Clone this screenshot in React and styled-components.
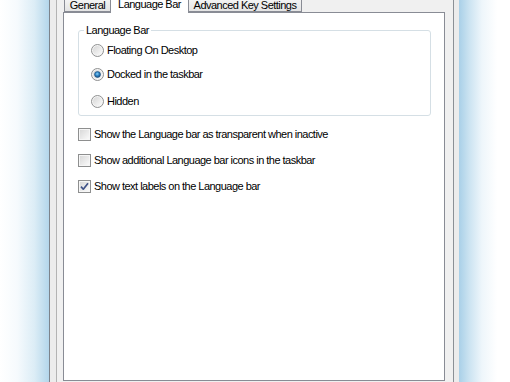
import React from 'react';
import styled, { createGlobalStyle } from 'styled-components';

const Global = createGlobalStyle`
  html, body { margin: 0; padding: 0; background: #fff; overflow: hidden; }
  #root { width: 510px; height: 382px; }
`;

const Page = styled.div`
  display: flex;
  width: 510px;
  height: 382px;
  overflow: hidden;
  font-family: "Liberation Sans", Arial, sans-serif;
  font-size: 11px;
  letter-spacing: -0.52px;
  color: #000;
`;

const Backdrop = styled.div`
  flex: none;
  width: ${p => p.$w}px;
  background: ${p =>
    p.$side === 'left'
      ? 'linear-gradient(to right, #ffffff 0%, #f6fafd 35%, #dcedf6 70%, #b3d6eb 100%)'
      : 'linear-gradient(to right, #a9d0e8 0%, #cbe3f1 20%, #eef6fb 45%, #ffffff 75%)'};
`;

const Frame = styled.div`
  flex: none;
  display: flex;
  width: 410px;
  box-sizing: border-box;
  border-left: 1px solid #7d848c;
  padding: 0 5px 0 6px;
  background: #ececec;
`;

const Body = styled.div`
  flex: 1;
  display: flex;
  flex-direction: column;
  border-left: 1px solid #b3b3b3;
  border-right: 1px solid #8b9096;
  background: #f0f0f0;
  padding: 0 8px 1px 6px;
`;

const TabStrip = styled.div`
  flex: none;
  display: flex;
  height: 12px;
  padding-left: 1px;
  position: relative;
  z-index: 1;
`;

const Tab = styled.div`
  flex: none;
  box-sizing: border-box;
  width: ${p => p.$w}px;
  height: ${p => (p.$active ? 13 : 12)}px;
  margin: 0 ${p => (p.$active ? -1 : 0)}px;
  border: 1px solid #898c95;
  border-top: none;
  border-bottom: ${p => (p.$active ? 'none' : '1px solid #898c95')};
  background: ${p => (p.$active ? '#ffffff' : 'linear-gradient(to bottom, #f3f3f3, #e4e4e4)')};
  text-align: center;
  white-space: nowrap;
  line-height: ${p => (p.$active ? 8 : 10)}px;
  position: relative;
  z-index: ${p => (p.$active ? 2 : 1)};
`;

const Panel = styled.div`
  flex: 1;
  border: 1px solid #898c95;
  background: #ffffff;
  padding: 11px 13px 0 14px;
`;

const GroupBox = styled.fieldset`
  margin: 0;
  padding: 0;
  border: 1px solid #d5dfe5;
  border-radius: 3px;
`;

const Legend = styled.legend`
  margin-left: 5px;
  padding: 0 2px;
  line-height: 13px;
`;

const RadioList = styled.div`
  display: flex;
  flex-direction: column;
  padding: 7px 0 7px 12px;
`;

const Option = styled.label`
  display: flex;
  align-items: center;
  gap: 3px;
  height: 13px;
  line-height: 13px;
  margin-top: ${p => p.$top || 0}px;
  white-space: nowrap;
`;

const CheckList = styled.div`
  display: flex;
  flex-direction: column;
  margin-top: 12px;
`;

const Control = styled.svg`
  flex: none;
  display: block;
`;

function Radio({ checked }) {
  return (
    <Control width="13" height="13" viewBox="0 0 13 13">
      <defs>
        <linearGradient id="rbg" x1="0" y1="0" x2="1" y2="1">
          <stop offset="0" stopColor="#d6d6d6" />
          <stop offset="1" stopColor="#fbfbfb" />
        </linearGradient>
        <radialGradient id="rdot" cx="0.45" cy="0.4" r="0.6">
          <stop offset="0" stopColor="#8fd0f5" />
          <stop offset="0.5" stopColor="#2f86c6" />
          <stop offset="1" stopColor="#174a7c" />
        </radialGradient>
      </defs>
      <circle cx="6.5" cy="6.5" r="6" fill="#f4f4f4" stroke="#8f9091" />
      <circle cx="6.5" cy="6.5" r="4.5" fill="url(#rbg)" />
      {checked && <circle cx="6.5" cy="6.5" r="3" fill="url(#rdot)" stroke="#1c4f80" strokeWidth="0.6" />}
    </Control>
  );
}

function Check({ checked }) {
  return (
    <Control width="13" height="13" viewBox="0 0 13 13">
      <defs>
        <linearGradient id="cbg" x1="0" y1="0" x2="1" y2="1">
          <stop offset="0" stopColor="#d9d9d9" />
          <stop offset="1" stopColor="#f9f9f9" />
        </linearGradient>
      </defs>
      <rect x="0.5" y="0.5" width="12" height="12" fill="#f6f6f6" stroke="#8e8f8f" />
      <rect x="2" y="2" width="9" height="9" fill="url(#cbg)" />
      {checked && (
        <path d="M3 6.6 L5.3 9.2 L10 3.2" fill="none" stroke="#3f5287" strokeWidth="1.7" strokeLinejoin="round" />
      )}
    </Control>
  );
}

export default function App() {
  return (
    <Page>
      <Global />
      <Backdrop $side="left" $w={49} />
      <Frame>
        <Body>
          <TabStrip>
            <Tab $w={47}>General</Tab>
            <Tab $w={79} $active>Language Bar</Tab>
            <Tab $w={114}>Advanced Key Settings</Tab>
          </TabStrip>
          <Panel>
            <GroupBox>
              <Legend>Language Bar</Legend>
              <RadioList>
                <Option><Radio />Floating On Desktop</Option>
                <Option $top={11}><Radio checked />Docked in the taskbar</Option>
                <Option $top={14}><Radio />Hidden</Option>
              </RadioList>
            </GroupBox>
            <CheckList>
              <Option><Check />Show the Language bar as transparent when inactive</Option>
              <Option $top={13}><Check />Show additional Language bar icons in the taskbar</Option>
              <Option $top={13}><Check checked />Show text labels on the Language bar</Option>
            </CheckList>
          </Panel>
        </Body>
      </Frame>
      <Backdrop $side="right" $w={51} />
    </Page>
  );
}
